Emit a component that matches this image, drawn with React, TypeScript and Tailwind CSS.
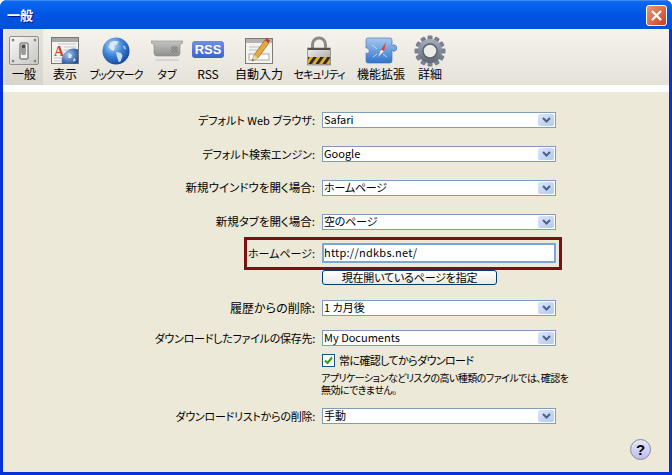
import { ReactNode } from 'react';

const labelFont = "[font-family:'Noto_Sans_CJK_JP',sans-serif] [font-feature-settings:'palt']";

function SwitchIcon() {
  return (
    <svg width="30" height="30" viewBox="0 0 30 30">
      <defs>
        <linearGradient id="plate" x1="0" y1="0" x2="1" y2="1">
          <stop offset="0" stopColor="#fbfbfb" />
          <stop offset="1" stopColor="#c4c4c0" />
        </linearGradient>
      </defs>
      <rect x="0.5" y="0.5" width="29" height="28" rx="1.5" fill="url(#plate)" stroke="#8f8f8c" />
      {[[4, 4], [26, 4], [4, 25], [26, 25]].map(([x, y]) => (
        <circle key={`${x}-${y}`} cx={x} cy={y} r="1.5" fill="#6d6d6b" stroke="#e8e8e8" strokeWidth="0.5" />
      ))}
      <rect x="11" y="7" width="8" height="16" rx="1" fill="#f2f2f0" stroke="#555" />
      <rect x="12.5" y="8.500" width="4" height="9" fill="#4c4c4a" />
      <rect x="12.5" y="12" width="4" height="7" fill="#9a9a98" />
    </svg>
  );
}

function DisplayIcon() {
  return (
    <svg width="28" height="28" viewBox="0 0 28 28">
      <defs>
        <radialGradient id="dispBlue" cx="0.4" cy="0.4" r="0.7">
          <stop offset="0" stopColor="#a8c8ec" />
          <stop offset="1" stopColor="#1f4f9c" />
        </radialGradient>
      </defs>
      <rect x="0.5" y="0.5" width="27" height="26" fill="#f4f4f2" stroke="#777" />
      <rect x="1" y="1" width="26" height="4" fill="#a8a8a6" />
      <path d="M7 7h18M13 10h12M13 13h12M3 21h8M3 24h7" stroke="#c6c6c6" strokeWidth="1" />
      <text x="3" y="19" fontSize="14" fontWeight="700" fontFamily="Liberation Serif" fill="#d9412a">A</text>
      <path d="M11 26.500a12 12 0 0 1 16-14v14z" fill="url(#dispBlue)" />
      <path d="M18 16l3 2-1 3-3 0zM23 21l2 2-3 2z" fill="#dfe9f4" />
    </svg>
  );
}

function GlobeIcon() {
  return (
    <svg width="28" height="28" viewBox="0 0 30 30">
      <defs>
        <radialGradient id="globe" cx="0.38" cy="0.3" r="0.8">
          <stop offset="0" stopColor="#bcdcf8" />
          <stop offset="0.45" stopColor="#3f86d8" />
          <stop offset="1" stopColor="#0b3a94" />
        </radialGradient>
      </defs>
      <circle cx="15" cy="15" r="14.500" fill="url(#globe)" />
      <path d="M9 6c3-2 7-2 9-1l-2 3-3 1 1 3-2 3-2-1-3-3zM15 16l5 1 2 3-2 6-2 1-2-6z" fill="#e4eef8" opacity="0.85" />
      <path d="M22 9l3 1 1 3-2 0z" fill="#e4eef8" opacity="0.6" />
    </svg>
  );
}

function TabIcon() {
  return (
    <svg width="32" height="22" viewBox="0 0 32 22">
      <defs>
        <linearGradient id="tabFill" x1="0" y1="0" x2="0" y2="1">
          <stop offset="0" stopColor="#c4c4c2" />
          <stop offset="1" stopColor="#8f8f8d" />
        </linearGradient>
      </defs>
      <path d="M0 1h32v2q-3 0-3 3v7q0 3-3 3H6q-3 0-3-3V6q0-3-3-3z" fill="url(#tabFill)" stroke="#8b8b89" strokeWidth="0.6" />
      <rect x="21" y="7" width="5" height="5" fill="#a6a6a4" stroke="#6f6f6d" strokeWidth="0.7" />
      <path d="M22 8l3 3M25 8l-3 3" stroke="#666" strokeWidth="0.7" />
      <rect x="4" y="19" width="24" height="2" fill="#d8d6cf" />
    </svg>
  );
}

function RssIcon() {
  return (
    <div className="mb-[3px] flex h-[17px] w-8 items-center justify-center rounded-[3px] bg-gradient-to-b from-[#6f8fe6] to-[#3f61cf] text-[13px] font-bold leading-none text-white [font-family:'Liberation_Sans',sans-serif]">
      RSS
    </div>
  );
}

function AutofillIcon() {
  return (
    <svg width="28" height="28" viewBox="0 0 28 28">
      <rect x="0.5" y="1.500" width="27" height="25" fill="#f3f3f0" stroke="#7b7b79" />
      <rect x="1" y="2" width="26" height="4" fill="#b3b3b0" />
      <path d="M4 10h11M4 13h9" stroke="#bdbdbb" />
      <rect x="4" y="17" width="20" height="6" fill="#fff" stroke="#a8a8a6" />
      <path d="M7 24l2-6 11-15 4 3-11 15z" fill="#e8a93c" stroke="#7a5a1c" strokeWidth="0.6" />
      <path d="M20 3l1.500-2 3.500 2.500-1.500 2.500z" fill="#c93a3a" />
      <path d="M7 24l2-6 4 3z" fill="#f1d9a8" />
      <path d="M7 24l.7-2 1.300 1z" fill="#333" />
    </svg>
  );
}

function LockIcon() {
  return (
    <svg width="24" height="30" viewBox="0 0 24 30">
      <defs>
        <linearGradient id="lockBody" x1="0" y1="0" x2="1" y2="1">
          <stop offset="0" stopColor="#f0f0ee" />
          <stop offset="1" stopColor="#9d9d9b" />
        </linearGradient>
        <pattern id="hazard" width="7" height="8" patternUnits="userSpaceOnUse" patternTransform="skewX(-35)">
          <rect width="7" height="8" fill="#e8b020" />
          <rect width="3.500" height="8" fill="#2a2620" />
        </pattern>
      </defs>
      <path d="M5.500 13V8.500a6.500 6.500 0 0 1 13 0V13" fill="none" stroke="#8a8a88" strokeWidth="3" />
      <rect x="0.5" y="12" width="23" height="17" fill="url(#lockBody)" stroke="#6b6b69" strokeWidth="0.6" />
      <rect x="1" y="21" width="22" height="7" fill="url(#hazard)" />
      <rect x="1" y="12" width="22" height="2" fill="#55534c" />
    </svg>
  );
}

function ExtensionIcon() {
  return (
    <svg width="32" height="28" viewBox="0 0 32 28">
      <defs>
        <linearGradient id="extFill" x1="0" y1="0" x2="0" y2="1">
          <stop offset="0" stopColor="#a8c8f0" />
          <stop offset="1" stopColor="#2f74cc" />
        </linearGradient>
      </defs>
      <path d="M3 1h22q2 0 2 2v6q1-2 3-1 2 1 2 3t-2 3q-2 1-3-1v11q0 2-2 2H3q-2 0-2-2v-8q2 1 3-.5 1-2.500-1-4-1-1-2-.5V3q0-2 2-2z" fill="url(#extFill)" stroke="#3a6fb0" strokeWidth="0.6" />
      <path d="M21 5l-5 8-3 7 6-6z" fill="#d9412a" />
      <path d="M13 20l3-7 3 1z" fill="#f4f8fc" />
      <path d="M7 8l5 4M22 20l-4-3M8 20l4-3" stroke="#d8e8f8" strokeWidth="0.8" />
    </svg>
  );
}

function GearIcon() {
  const teeth = [0, 30, 60, 90, 120, 150, 180, 210, 240, 270, 300, 330];
  return (
    <svg width="32" height="32" viewBox="0 0 32 32">
      <defs>
        <linearGradient id="gear" x1="0" y1="0" x2="0" y2="1">
          <stop offset="0" stopColor="#a9afbb" />
          <stop offset="1" stopColor="#5f6675" />
        </linearGradient>
      </defs>
      <g fill="url(#gear)">
        {teeth.map((a) => (
          <rect key={a} x="13.500" y="0.500" width="5" height="7" rx="1" fill="#7a8190" transform={`rotate(${a} 16 16)`} />
        ))}
        <circle cx="16" cy="16" r="12" />
      </g>
      <circle cx="16" cy="16" r="7" fill="#ecebe5" stroke="#59606e" strokeWidth="1.500" />
    </svg>
  );
}

const kana = 'text-[11px] tracking-[-1px]';

const toolbarItems: { label: string; left: string; icon: ReactNode; width: string; text: string }[] = [
  { label: '一般', left: 'ml-[2px]', width: 'w-[38px]', text: 'text-[12px]', icon: <SwitchIcon /> },
  { label: '表示', left: 'ml-[3px]', width: 'w-[38px]', text: 'text-[12px]', icon: <DisplayIcon /> },
  { label: 'ブックマーク', left: 'ml-[5px]', width: 'w-[54px]', text: kana, icon: <GlobeIcon /> },
  { label: 'タブ', left: 'ml-[5px]', width: 'w-[38px]', text: 'text-[11px]', icon: <TabIcon /> },
  { label: 'RSS', left: 'ml-[3px]', width: 'w-[38px]', text: 'text-[12px]', icon: <RssIcon /> },
  { label: '自動入力', left: 'ml-[5px]', width: 'w-[54px]', text: 'text-[12px]', icon: <AutofillIcon /> },
  { label: 'セキュリティ', left: 'ml-[5px]', width: 'w-[56px]', text: kana, icon: <LockIcon /> },
  { label: '機能拡張', left: 'ml-[7px]', width: 'w-[54px]', text: 'text-[12px]', icon: <ExtensionIcon /> },
  { label: '詳細', left: 'ml-[3px]', width: 'w-[38px]', text: 'text-[12px]', icon: <GearIcon /> },
];

function SelectBox({ value, tight }: { value: string; tight?: boolean }) {
  return (
    <div className="flex h-[16px] w-[234px] items-center justify-between border border-[#7f9db9] bg-white pl-[1px] pr-[1px]">
      <span className={`pb-[1px] text-[11px] leading-none text-black ${tight ? 'tracking-[-0.2px]' : ''}`}>{value}</span>
      <span className="flex h-[12px] w-[16px] items-center justify-center rounded-[2px] bg-gradient-to-br from-[#dbe6fb] to-[#b4c8f0]">
        <svg width="9" height="6" viewBox="0 0 9 6">
          <path d="M1 1l3.500 3.500L8 1" fill="none" stroke="#4d6185" strokeWidth="2" />
        </svg>
      </span>
    </div>
  );
}

function Row({ label, children, size }: { label: string; children: ReactNode; size: string }) {
  return (
    <div className="flex items-center">
      <span className={`mr-[7px] w-[312px] whitespace-nowrap text-right leading-none text-black ${size}`}>{label}</span>
      {children}
    </div>
  );
}

export default function App() {
  return (
    <div className={`flex h-[475px] w-[672px] flex-col overflow-hidden rounded-t-[7px] bg-[#0831d9] ${labelFont}`}>
      {/* Title bar */}
      <div className="flex h-[29px] items-center justify-between border-t border-[#3f8cf3] bg-gradient-to-b from-[#0a6af0] via-[#0054e3] to-[#0350d8] pl-[7px] pr-[5px]">
        <span className="text-[13px] font-bold text-white [text-shadow:1px_1px_0_#0f1089]">一般</span>
        <span className="flex h-[21px] w-[21px] items-center justify-center rounded-[3px] border border-white bg-gradient-to-br from-[#e8957a] to-[#c8401a]">
          <svg width="13" height="13" viewBox="0 0 13 13">
            <path d="M2 2l9 9M11 2l-9 9" stroke="#fff" strokeWidth="2.200" />
          </svg>
        </span>
      </div>

      <div className="mx-[3px] mb-[3px] flex flex-1 flex-col bg-[#ece9d8]">
        {/* Toolbar */}
        <div className="flex h-[56px] bg-gradient-to-b from-[#f5f3ec] to-[#e5e2da]">
          {toolbarItems.map((item, i) => (
            <div
              key={item.label}
              className={`flex h-full flex-col items-center justify-end pb-[4px] ${item.left} ${item.width} ${i === 0 ? 'bg-gradient-to-b from-[#e6e4dc] to-[#d6d4cc]' : ''}`}
            >
              <div className="flex h-[30px] items-center justify-center">{item.icon}</div>
              <span className={`mt-[1px] whitespace-nowrap leading-[14px] text-black ${item.text}`}>{item.label}</span>
            </div>
          ))}
        </div>
        <div className="h-[7px] bg-white" />

        {/* Settings */}
        <div className="relative flex flex-1 flex-col pt-[20px]">
          <Row label="デフォルト Web ブラウザ:" size="text-[11px]"><SelectBox value="Safari" /></Row>
          <div className="mt-[18px]"><Row label="デフォルト検索エンジン:" size="text-[11px]"><SelectBox value="Google" /></Row></div>
          <div className="mt-[18px]"><Row label="新規ウインドウを開く場合:" size="text-[11.5px]"><SelectBox value="ホームページ" tight /></Row></div>
          <div className="mt-[18px]"><Row label="新規タブを開く場合:" size="text-[11.5px]"><SelectBox value="空のページ" tight /></Row></div>

          <div className="relative mt-[13px]">
            <Row label="ホームページ:" size="text-[11px]">
              <div className="flex h-[20px] w-[234px] items-center rounded-[1px] border-2 border-[#7ba6d8] bg-white pb-[1px] text-[11px] leading-none tracking-[0.25px] text-black">
                http://ndkbs.net/
              </div>
            </Row>
            <div className="absolute left-[241px] top-[-6px] h-[33px] w-[318px] border-[3px] border-[#7b1012]" />
          </div>

          <div className="mt-[7px] flex pl-[319px]">
            <button className="h-[15px] w-[175px] rounded-[3px] border border-[#003c74] bg-gradient-to-b from-white to-[#ece9df] text-[11px] leading-none tracking-[-0.2px] text-black">
              現在開いているページを指定
            </button>
          </div>

          <div className="mt-[15px]"><Row label="履歴からの削除:" size="text-[12px]"><SelectBox value="1 カ月後" /></Row></div>
          <div className="mt-[14px]"><Row label="ダウンロードしたファイルの保存先:" size="text-[11px] tracking-[-0.25px]"><SelectBox value="My Documents" /></Row></div>

          <div className="mt-[7px] flex h-[14px] items-center gap-[4px] pl-[319px]">
            <span className="flex h-[13px] w-[13px] items-center justify-center border border-[#1c5180] bg-white">
              <svg width="9" height="9" viewBox="0 0 9 9">
                <path d="M1 4.500l2.500 2.500L8 1.500" fill="none" stroke="#21a121" strokeWidth="2" />
              </svg>
            </span>
            <span className="text-[11px] leading-none tracking-[-0.6px] text-black">常に確認してからダウンロード</span>
          </div>
          <p className="ml-[318px] mt-[5px] w-[254px] text-[10px] leading-[12px] tracking-[-0.55px] text-black">
            アプリケーションなどリスクの高い種類のファイルでは、確認を<br />無効にできません。
          </p>

          <div className="mt-[12px]"><Row label="ダウンロードリストからの削除:" size="text-[11px] tracking-[-0.25px]"><SelectBox value="手動" /></Row></div>

          <div className="absolute bottom-[12px] right-[18px] flex h-[21px] w-[21px] items-center justify-center rounded-full border border-[#8a8a94] bg-gradient-to-b from-[#e6e6fb] to-[#bdbdf0] text-[15px] font-bold leading-none text-black [font-family:'Liberation_Sans',sans-serif]">
            ?
          </div>
        </div>
      </div>
    </div>
  );
}
